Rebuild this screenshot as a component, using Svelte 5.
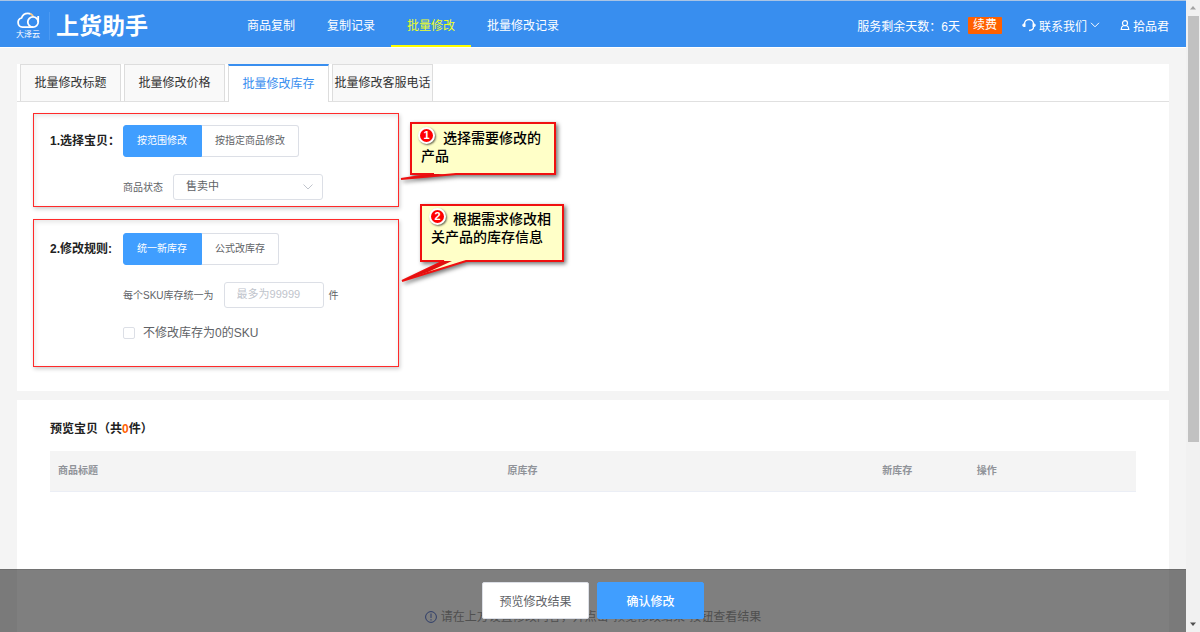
<script lang="ts">
	const navItems = ['商品复制', '复制记录', '批量修改', '批量修改记录'];
	const tabs = ['批量修改标题', '批量修改价格', '批量修改库存', '批量修改客服电话'];
	const columns = [
		{ label: '商品标题', width: 41.4 },
		{ label: '原库存', width: 34.5 },
		{ label: '新库存', width: 8.7 },
		{ label: '操作', width: 15.4 }
	];

	let activeNav = $state('批量修改');
	let activeTab = $state('批量修改库存');
	let scope = $state('按范围修改');
	let rule = $state('统一新库存');
	let status = $state('售卖中');
	let stock = $state('');
	let skipEmpty = $state(false);
	let total = $state(0);
</script>

{#snippet group(options: string[], current: string, pick: (value: string) => void)}
	<div class="btn-group">
		{#each options as option}
			<button
				type="button"
				class:active={option === current}
				aria-pressed={option === current}
				onclick={() => pick(option)}>{option}</button
			>
		{/each}
	</div>
{/snippet}

<div class="window">
	<div class="page">
		<header>
			<div class="brand">
				<div class="cloud">
					<svg width="24" height="17" viewBox="0 0 24 17" fill="none" stroke="#fff" stroke-width="1.800">
						<path d="M17 15.200H6.500A4.700 4.700 0 0 1 5.500 6C6.500 3 9 1.300 11.800 1.300c1.300 0 2.300.3 3.200.8" />
						<path d="M14 1.600c1.600.6 2.700 1.600 3.300 3" stroke="#f5c98a" />
						<circle cx="17" cy="10" r="5.200" />
						<path d="M22.200 4v6" />
					</svg>
					<span>大泽云</span>
				</div>
				<strong>上货助手</strong>
			</div>
			<nav>
				{#each navItems as item}
					<a href="#top" class:active={item === activeNav} onclick={() => (activeNav = item)}>{item}</a>
				{/each}
			</nav>
			<div class="account">
				<span>服务剩余天数：6天</span>
				<a class="renew" href="#renew">续费</a>
				<a class="contact" href="#contact">
					<svg width="14" height="14" viewBox="0 0 14 14" fill="none" stroke="#fff" stroke-width="1.300">
						<path d="M2.500 8.500V6a4.500 4.500 0 0 1 9 0v3c0 2-1.500 3.300-4.500 3.500" />
						<path d="M2.300 5.500v3.500M11.700 5.500v3.500" stroke-width="2.200" />
						<path d="M1 6.200v2M13 6.200v2" />
					</svg>
					联系我们
					<svg width="10" height="6" viewBox="0 0 10 6" fill="none" stroke="#fff"><path d="M1 .8 5 4.800 9 .8" /></svg>
				</a>
				<a class="user" href="#user">
					<svg width="10" height="11" viewBox="0 0 10 11" fill="none" stroke="#fff" stroke-width="1.200">
						<circle cx="5" cy="3.200" r="2.500" />
						<path d="M3.500 5.500C2 6.200 1.200 7.500 1.200 9.500h7.600c0-2-.8-3.300-2.300-4" />
					</svg>
					拾品君
				</a>
			</div>
		</header>

		<main>
			<section class="panel">
				<div class="tabs">
					{#each tabs as tab}
						<button type="button" class:active={tab === activeTab} onclick={() => (activeTab = tab)}>{tab}</button>
					{/each}
				</div>

				<div class="steps">
					<div class="step">
						<h2>1.选择宝贝：</h2>
						<div class="fields">
							{@render group(['按范围修改', '按指定商品修改'], scope, (v) => (scope = v))}
							<div class="row">
								<label for="status">商品状态</label>
								<div class="select">
									<select id="status" bind:value={status}>
										<option>售卖中</option>
										<option>仓库中</option>
									</select>
									<svg width="10" height="6" viewBox="0 0 10 6" fill="none" stroke="#c0c4cc"><path d="M.5.5 5 5 9.500.5" /></svg>
								</div>
							</div>
						</div>

						<div class="callout first">
							<svg width="164" height="70" viewBox="0 0 164 70">
								<path d="M13 12H157V63H58L3 68 36 63H13Z" fill="#ffffc8" stroke="#f01010" stroke-width="2" />
								<path d="M3 68 36 63H50Z" fill="#e01010" />
							</svg>
							<b>1</b>
							<p>选择需要修改的产品</p>
						</div>
					</div>

					<div class="step rules">
						<h2>2.修改规则:</h2>
						<div class="fields">
							{@render group(['统一新库存', '公式改库存'], rule, (v) => (rule = v))}
							<div class="row">
								<label for="stock">每个SKU库存统一为</label>
								<input id="stock" type="text" placeholder="最多为99999" bind:value={stock} />
								<span>件</span>
							</div>
							<label class="check">
								<input type="checkbox" bind:checked={skipEmpty} />
								不修改库存为0的SKU
							</label>
						</div>

						<div class="callout second">
							<svg width="170" height="82" viewBox="0 0 170 82">
								<path d="M23 3H165V59H68L4 79 46 59H23Z" fill="#ffffc8" stroke="#f01010" stroke-width="2" />
								<path d="M4 79 46 59H54L30 70Z" fill="#e01010" />
							</svg>
							<b>2</b>
							<p>根据需求修改相关产品的库存信息</p>
						</div>
					</div>
				</div>
			</section>

			<section class="panel preview">
				<h2>预览宝贝（共<em>{total}</em>件）</h2>
				<table>
					<thead>
						<tr>
							{#each columns as column}
								<th style="width: {column.width}%">{column.label}</th>
							{/each}
						</tr>
					</thead>
				</table>
				<p class="hint">
					<svg width="12" height="12" viewBox="0 0 12 12" fill="none" stroke="#5a78d0">
						<circle cx="6" cy="6" r="5.400" />
						<path d="M6 2.500v4.500M6 8.200v1.300" />
					</svg>
					请在上方设置修改内容，并点击"预览修改结果"按钮查看结果
				</p>
			</section>
		</main>

		<footer>
			<button type="button">预览修改结果</button>
			<button type="button" class="primary">确认修改</button>
		</footer>
	</div>

	<div class="scrollbar" aria-hidden="true">
		<svg width="8" height="5" viewBox="0 0 8 5"><path d="M1 4.500 4 1l3 3.500Z" fill="#a3a3a3" /></svg>
		<div class="track"><div class="thumb"></div></div>
		<svg width="8" height="5" viewBox="0 0 8 5"><path d="M1 .5 4 4 7 .5Z" fill="#505050" /></svg>
	</div>
</div>

<style>
	:global(body) {
		margin: 0;
		font-family: 'Liberation Sans', 'Noto Sans CJK SC', sans-serif;
		font-size: 12px;
		color: #606266;
	}

	button,
	input,
	select {
		font-family: inherit;
		box-sizing: border-box;
	}

	button {
		cursor: pointer;
	}

	a {
		color: inherit;
		text-decoration: none;
	}

	h2,
	p {
		margin: 0;
	}

	h2 {
		font-size: 12px;
		color: #222;
	}

	.window {
		display: flex;
		height: 100vh;
		overflow: hidden;
	}

	.page {
		position: relative;
		flex: 1;
		min-width: 0;
		overflow: hidden;
		background: #f4f4f4;
	}

	header {
		display: flex;
		height: 46px;
		padding-right: 17px;
		border-top: 1px solid #aac4e4;
		border-bottom: 1px solid #fff;
		background: #388eef;
		color: #fff;
	}

	.brand {
		display: flex;
		align-items: center;
		box-sizing: border-box;
		width: 231px;
		padding: 3px 0 0 16px;
	}

	.cloud {
		display: flex;
		flex-direction: column;
		align-items: center;
		padding-right: 9px;
		border-right: 1px solid #4b9af3;
		font-size: 8px;
		line-height: 11px;
	}

	.brand strong {
		padding-left: 6px;
		font-size: 23px;
		line-height: 40px;
	}

	nav {
		display: flex;
	}

	nav a {
		padding: 0 16px;
		line-height: 50px;
		height: 44px;
		border-bottom: 2px solid transparent;
	}

	nav a.active {
		color: #f0ff1e;
		border-color: #ff0;
	}

	.account {
		display: flex;
		align-items: center;
		margin-left: auto;
		padding-top: 2px;
	}

	.renew {
		margin: 0 20px 0 8px;
		padding: 0 5px;
		border-radius: 1px;
		background: #ff6000;
		line-height: 17px;
	}

	.contact,
	.user {
		display: flex;
		align-items: center;
		gap: 3px;
	}

	.contact {
		margin-right: 20px;
	}

	main {
		display: flex;
		flex-direction: column;
		gap: 9px;
		padding: 16px 17px;
	}

	.panel {
		background: #fff;
	}

	.tabs {
		display: flex;
		gap: 3px;
		padding-left: 3px;
		border-bottom: 1px solid #e0e0e0;
	}

	.tabs button {
		width: 101px;
		height: 37px;
		padding: 0 0 3px;
		border: 1px solid #ddd;
		border-bottom: 0;
		background: #f9f9f9;
		color: #333;
		font-size: 12px;
		white-space: nowrap;
	}

	.tabs button.active {
		height: 38px;
		margin-bottom: -1px;
		border-top: 2px solid #388eef;
		background: #fff;
		color: #388eef;
	}

	.steps {
		display: flex;
		flex-direction: column;
		gap: 12px;
		max-width: 366px;
		padding: 11px 0 24px 16px;
	}

	.step {
		position: relative;
		display: flex;
		padding: 11px 16px 6px;
		border: 1px solid #ff2a2a;
		box-shadow:
			1px 2px 4px rgba(0, 0, 0, 0.2),
			inset 1px 2px 5px rgba(0, 0, 0, 0.1);
	}

	.step.rules {
		padding: 13px 16px 25px;
	}

	.step h2 {
		width: 73px;
		line-height: 32px;
		white-space: nowrap;
	}

	.fields {
		display: flex;
		flex-direction: column;
		gap: 17px;
		font-size: 10px;
	}

	.btn-group {
		display: flex;
	}

	.btn-group button {
		height: 32px;
		padding: 0 13px 3px;
		border: 1px solid #dcdfe6;
		border-left: 0;
		border-radius: 0 3px 3px 0;
		background: #fff;
		color: #606266;
		font-size: 10px;
	}

	.btn-group button:first-child {
		padding-right: 14px;
		border-left: 1px solid #dcdfe6;
		border-radius: 3px 0 0 3px;
	}

	.btn-group button.active {
		border-color: #409eff;
		background: #409eff;
		color: #fff;
	}

	.row {
		display: flex;
		align-items: center;
		gap: 10px;
	}

	.row label,
	.row span {
		padding-bottom: 2px;
	}

	.row span {
		margin-left: -5px;
	}

	.select {
		display: flex;
		align-items: center;
		width: 150px;
	}

	.select select {
		width: 100%;
		appearance: none;
	}

	.select svg {
		flex: none;
		margin-left: -20px;
		pointer-events: none;
	}

	.row input,
	.row select {
		height: 26px;
		padding: 0 12px 2px;
		border: 1px solid #dcdfe6;
		border-radius: 3px;
		background: #fff;
		color: #606266;
		font-size: 11px;
	}

	.row input {
		width: 100px;
	}

	.row input::placeholder {
		color: #c0c4cc;
	}

	.check {
		display: flex;
		align-items: center;
		gap: 8px;
		font-size: 12px;
		line-height: 16px;
	}

	.check input {
		appearance: none;
		width: 12px;
		height: 12px;
		margin: 0;
		border: 1px solid #dcdfe6;
		border-radius: 2px;
		background: #fff;
	}

	.check input:checked {
		border-color: #409eff;
		background: #409eff;
	}

	/* notes sit over the panel, their tails point at the step box */
	.callout {
		position: absolute;
		left: 100%;
		color: #000;
		font-size: 14px;
		font-weight: 500;
		line-height: 18px;
	}

	.callout svg {
		display: block;
		filter: drop-shadow(2px 2px 2px rgba(0, 0, 0, 0.55));
	}

	.callout p,
	.callout b {
		position: absolute;
	}

	.callout p {
		text-indent: 22px;
	}

	.callout b {
		width: 13px;
		border: 2px solid #fff;
		border-radius: 50%;
		background: #f00;
		box-shadow: 1px 1px 2px rgba(0, 0, 0, 0.6);
		font-size: 11px;
		line-height: 13px;
		color: #fff;
		text-align: center;
	}

	.first {
		top: -3px;
	}

	.first b {
		top: 16px;
		left: 20px;
	}

	.first p {
		top: 18px;
		left: 23px;
		width: 128px;
	}

	.second {
		top: -18px;
	}

	.second b {
		top: 6px;
		left: 31px;
	}

	.second p {
		top: 8px;
		left: 33px;
		width: 126px;
	}

	.preview {
		padding: 19px 33px 40px;
	}

	.preview h2 {
		line-height: 20px;
	}

	.preview em {
		color: #ff6000;
		font-style: normal;
	}

	table {
		width: 100%;
		margin-top: 12px;
		border-collapse: collapse;
		table-layout: fixed;
	}

	th {
		box-sizing: border-box;
		height: 40px;
		padding: 0 8px 2px;
		border-bottom: 1px solid #ebeef5;
		background: #f4f4f4;
		color: #909399;
		font-size: 10px;
		text-align: left;
	}

	.hint {
		display: flex;
		align-items: center;
		justify-content: center;
		gap: 4px;
		margin-top: 115px;
		color: #a0a0a0;
		line-height: 20px;
	}

	footer {
		position: absolute;
		right: 0;
		bottom: 0;
		left: 0;
		display: flex;
		justify-content: center;
		gap: 8px;
		padding: 12px 0 13px;
		border-top: 1px solid rgba(0, 0, 0, 0.1);
		background: rgba(0, 0, 0, 0.5);
	}

	footer button {
		width: 107px;
		height: 37px;
		border: 1px solid #dcdfe6;
		border-radius: 2px;
		background: #fff;
		color: #606266;
		font-size: 12px;
	}

	footer .primary {
		border-color: #409eff;
		background: #409eff;
		color: #fff;
		font-weight: 500;
	}

	.scrollbar {
		display: flex;
		flex-direction: column;
		align-items: center;
		gap: 6px;
		box-sizing: border-box;
		width: 14px;
		padding: 5px 0;
		background: #f1f1f1;
	}

	.track {
		flex: 1;
		width: 11px;
	}

	.thumb {
		height: 71%;
		background: #c1c1c1;
	}
</style>
